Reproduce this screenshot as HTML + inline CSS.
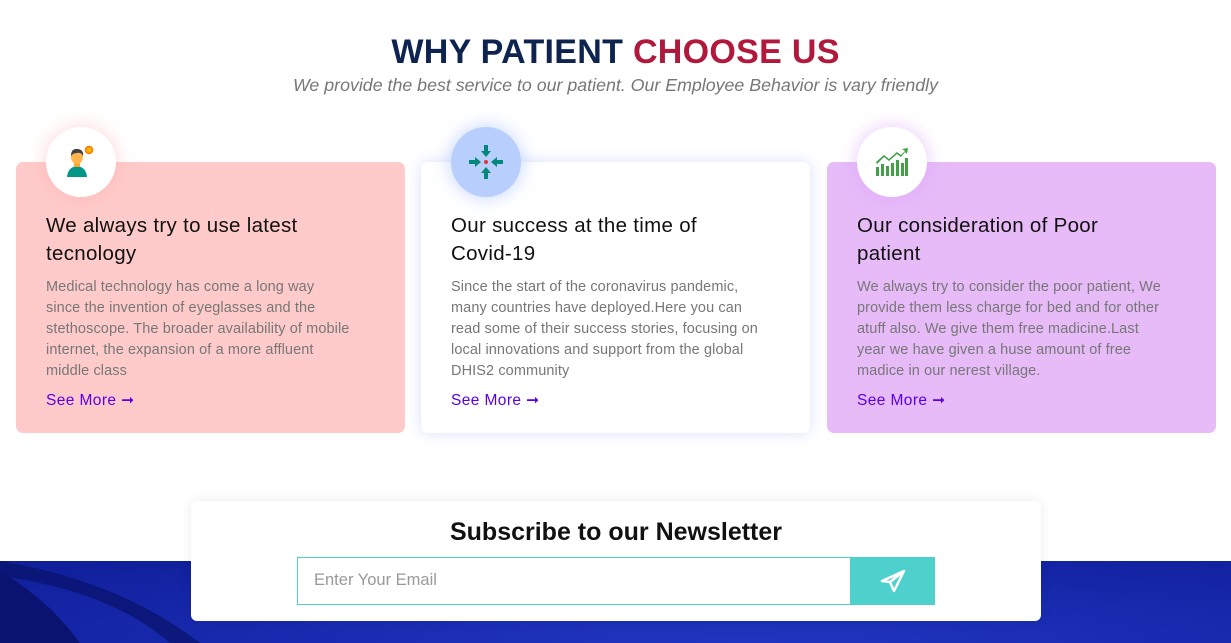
<!DOCTYPE html>
<html><head><meta charset="utf-8"><style>
*{margin:0;padding:0;box-sizing:border-box}
body{width:1231px;height:643px;overflow:hidden;background:#fff;font-family:"Liberation Sans",sans-serif;position:relative}
h1{position:absolute;top:33px;left:0;width:1231px;text-align:center;font-size:34px;font-weight:700;color:#0d2350;letter-spacing:0.3px}
h1 span{color:#b0183c}
.sub{position:absolute;top:75px;left:0;width:1231px;text-align:center;font-size:17.8px;font-style:italic;color:#777}
.card{position:absolute;top:162px;height:271px;width:389px;border-radius:7px;padding:50px 30px 0 30px;white-space:nowrap}
.card h3{font-size:20.5px;font-weight:400;color:#111;line-height:28px;margin-bottom:9px;letter-spacing:0.3px}
.card p{font-size:14.5px;line-height:21px;color:#777;letter-spacing:0.1px}
.card a{display:block;margin-top:9px;font-size:15.5px;color:#5a00e6;text-decoration:none;letter-spacing:0.4px}
.circ{position:absolute;top:-35px;left:30px;width:70px;height:70px;border-radius:50%;background:#fff;display:flex;align-items:center;justify-content:center}
.band{position:absolute;top:561px;left:0;width:1231px;height:82px;background:radial-gradient(ellipse at 60% 100%,#2035c0,#1424a5 70%,#0f1f98);overflow:hidden}
.news{position:absolute;top:501px;left:191px;width:850px;height:120px;background:#fff;border-radius:6px;box-shadow:0 0 12px rgba(0,0,0,.08)}
.news h2{text-align:center;font-size:25px;font-weight:700;margin-top:17px;color:#111}
.inp{position:absolute;left:106px;top:56px;width:554px;height:48px;border:1.5px solid #4ed0cc;font-size:16.5px;color:#999;padding:13px 16px}
.btn{position:absolute;left:660px;top:56px;width:84px;height:48px;background:#4ed0cc;display:flex;align-items:center;justify-content:center}
</style></head><body>
<h1>WHY PATIENT <span>CHOOSE US</span></h1>
<div class="sub">We provide the best service to our patient. Our Employee Behavior is vary friendly</div>

<div class="card" style="left:16px;background:#fecbca">
<div class="circ" style="box-shadow:0 0 18px rgba(255,170,170,.5)"><svg width="34" height="34" viewBox="0 0 34 34"><circle cx="25" cy="5" r="3.5" fill="#ffb300" stroke="#f57c00" stroke-width="1.5"/><path d="M3 32 Q4 22 13 21 Q22 22 23 32Z" fill="#009688"/><rect x="10" y="17" width="6" height="5" fill="#f9a825"/><ellipse cx="13" cy="12" rx="6" ry="7" fill="#ffb74d"/><path d="M7 11 Q7 3 14 4 Q20 5 19 11 Q17 7 13 8 Q9 8 7 11Z" fill="#424242"/></svg></div>
<h3>We always try to use latest<br>tecnology</h3>
<p>Medical technology has come a long way<br>since the invention of eyeglasses and the<br>stethoscope. The broader availability of mobile<br>internet, the expansion of a more affluent<br>middle class</p>
<a>See More ➞</a></div>

<div class="card" style="left:421px;background:#fff;box-shadow:0 0 14px rgba(120,150,255,.3)">
<div class="circ" style="background:#b8cffe;box-shadow:0 0 18px rgba(150,180,255,.6)"><svg width="34" height="34" viewBox="0 0 34 34" fill="#00897b"><path d="M15 0h4v6h3l-5 6-5-6h3z"/><path d="M15 34h4v-6h3l-5-6-5 6h3z"/><path d="M0 15v4h6v3l6-5-6-5v3z"/><path d="M34 15v4h-6v3l-6-5 6-5v3z"/><circle cx="17" cy="17" r="2" fill="#e53935"/></svg></div>
<h3>Our success at the time of<br>Covid-19</h3>
<p>Since the start of the coronavirus pandemic,<br>many countries have deployed.Here you can<br>read some of their success stories, focusing on<br>local innovations and support from the global<br>DHIS2 community</p>
<a>See More ➞</a></div>

<div class="card" style="left:827px;background:#e6bbf8">
<div class="circ" style="box-shadow:0 0 18px rgba(220,160,250,.6)"><svg width="32" height="28" viewBox="0 0 32 28" fill="#43a047"><rect x="0" y="19" width="3" height="9"/><rect x="5" y="16" width="3" height="12"/><rect x="10" y="18" width="3" height="10"/><rect x="15" y="15" width="3" height="13"/><rect x="20" y="12" width="3" height="16"/><rect x="25" y="15" width="3" height="13"/><rect x="29" y="10" width="3" height="18"/><path d="M0 14 L8 7 L13 11 L21 4 L25 7 L29 3 L26 1 L32 0 L31 6 L29 4 L25 9 L21 6 L13 13 L8 9 L1 16Z"/></svg></div>
<h3>Our consideration of Poor<br>patient</h3>
<p>We always try to consider the poor patient, We<br>provide them less charge for bed and for other<br>atuff also. We give them free madicine.Last<br>year we have given a huse amount of free<br>madice in our nerest village.</p>
<a>See More ➞</a></div>

<div class="band"><svg width="1231" height="82" style="position:absolute;left:0;top:0"><path d="M0 10 Q50 40 80 82 L0 82Z" fill="#0a1470"/><path d="M0 0 Q120 20 200 82 L170 82 Q110 30 0 15Z" fill="#0a1470" opacity=".8"/></svg></div>

<div class="news"><h2>Subscribe to our Newsletter</h2>
<div class="inp">Enter Your Email</div>
<div class="btn"><svg width="26" height="24" viewBox="0 0 26 24" fill="none" stroke="#fff" stroke-width="2.5" stroke-linejoin="round"><path d="M24 2 L2 12 L10 13 L14 22 Z M10 13 L24 2"/></svg></div>
</div>
</body></html>
